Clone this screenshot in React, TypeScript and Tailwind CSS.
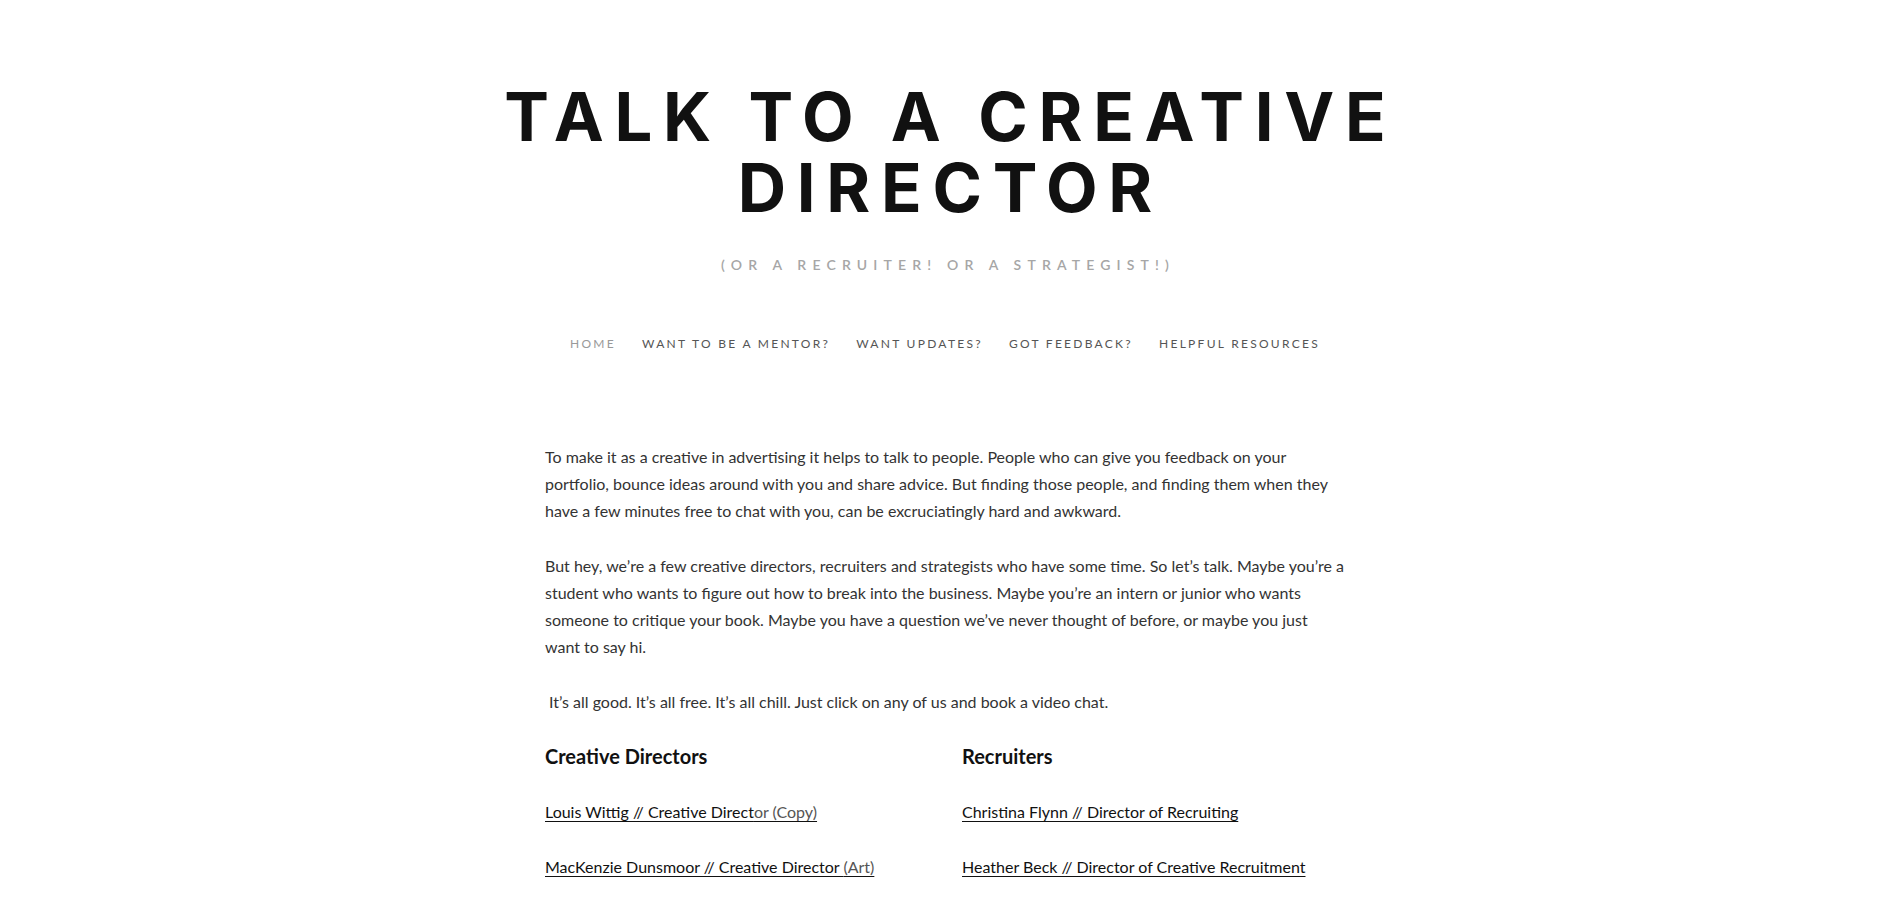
const navItems = [
  { label: 'Home', active: true },
  { label: 'Want to be a mentor?', active: false },
  { label: 'Want updates?', active: false },
  { label: 'Got Feedback?', active: false },
  { label: 'Helpful Resources', active: false },
];

export default function App() {
  return (
    <div className="min-h-screen bg-white text-[#333] font-['Lato',sans-serif]">
      <header className="flex flex-col items-center pt-[81px]">
        <h1 className="text-center font-['Inter',sans-serif] font-bold text-[67px] leading-[71px] tracking-[0.16em] pl-[0.16em] text-[#111] uppercase">
          Talk to a creative
          <br />
          director
        </h1>
        <p className="mt-[31px] pl-[0.44em] text-[14px] font-semibold tracking-[0.44em] text-[#a6a6a6] uppercase">
          (or a recruiter! or a strategist!)
        </p>
        <nav className="mt-[60px] flex gap-[26px] text-[12px] tracking-[0.19em] uppercase">
          {navItems.map((item) => (
            <a key={item.label} href="#" className={item.active ? 'text-[#999]' : 'text-[#555]'}>
              {item.label}
            </a>
          ))}
        </nav>
      </header>

      <main className="mx-auto w-[800px] pt-[90px] text-[16px] leading-[27px]">
        <p>
          To make it as a creative in advertising it helps to talk to people. People who can give you feedback on your
          portfolio, bounce ideas around with you and share advice. But finding those people, and finding them when they
          have a few minutes free to chat with you, can be excruciatingly hard and awkward.
        </p>
        <p className="mt-[28px]">
          But hey, we’re a few creative directors, recruiters and strategists who have some time. So let’s talk. Maybe
          you’re a student who wants to figure out how to break into the business. Maybe you’re an intern or junior who
          wants someone to critique your book. Maybe you have a question we’ve never thought of before, or maybe you just
          want to say hi.
        </p>
        <p className="mt-[28px] pl-[4px]">
          It’s all good. It’s all free. It’s all chill. Just click on any of us and book a video chat.
        </p>

        <div className="mt-[28px] grid grid-cols-[417px_1fr]">
          <div>
            <h3 className="text-[20px] font-bold text-[#111] leading-[27px]">Creative Directors</h3>
            <p className="mt-[28px]">
              <a href="#" className="underline underline-offset-[3px] text-[#111]">
                Louis Wittig // Creative Direct<span className="text-[#555]">or (Copy)</span>
              </a>
            </p>
            <p className="mt-[28px]">
              <a href="#" className="underline underline-offset-[3px] text-[#111]">
                MacKenzie Dunsmoor // Creative Director <span className="text-[#555]">(Art)</span>
              </a>
            </p>
          </div>
          <div>
            <h3 className="text-[20px] font-bold text-[#111] leading-[27px]">Recruiters</h3>
            <p className="mt-[28px]">
              <a href="#" className="underline underline-offset-[3px] text-[#111]">
                Christina Flynn // Director of Recruiting
              </a>
            </p>
            <p className="mt-[28px]">
              <a href="#" className="underline underline-offset-[3px] text-[#111]">
                Heather Beck // Director of Creative Recruitment
              </a>
            </p>
          </div>
        </div>
      </main>
    </div>
  );
}
